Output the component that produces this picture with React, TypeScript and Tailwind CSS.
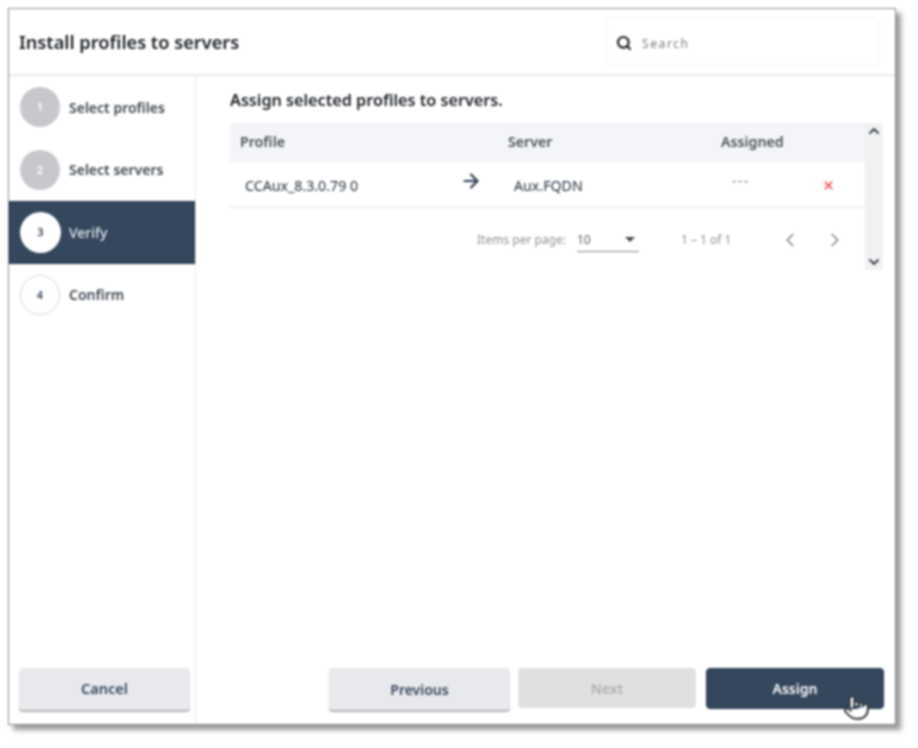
import React from 'react';
import { ArrowRight, ChevronDown, ChevronLeft, ChevronRight, ChevronUp, Pointer, Search, X } from 'lucide-react';

const steps = [
  { n: 1, label: 'Select profiles', state: 'done' },
  { n: 2, label: 'Select servers', state: 'done' },
  { n: 3, label: 'Verify', state: 'active' },
  { n: 4, label: 'Confirm', state: 'todo' },
];

const App: React.FC = () => {
  return (
    <div className="w-[918px] h-[748px] bg-white pt-[8px] pl-[8px] font-['Noto_Sans',sans-serif] blur-[0.8px]">
      <div className="relative w-[888px] h-[717px] flex flex-col bg-white border border-[#8c8c8c] shadow-[5px_5px_5px_rgba(0,0,0,0.4)]">
        {/* Header */}
        <div className="h-[67px] shrink-0 flex items-center justify-between pt-[1px] pl-[10px] pr-[16px] border-b-2 border-[#e8eaec]">
          <h1 className="mt-[1px] text-[18.2px] font-semibold text-[#1c2025]">Install profiles to servers</h1>
          <div className="w-[273px] h-[48px] flex items-center gap-[10px] pl-[9px] rounded border border-[#f1f2f3]">
            <Search size={16} strokeWidth={3.2} className="mt-[2px] text-[#1c2025]" />
            <span className="mt-[3px] text-[12px] tracking-[1.6px] text-[#777b80]">Search</span>
          </div>
        </div>

        <div className="flex-1 flex min-h-0">
          {/* Steps */}
          <div className="w-[187px] shrink-0 flex flex-col border-r border-[#e6e8ea] pb-[14px]">
            {steps.map((s) => (
              <div
                key={s.n}
                className={
                  s.state === 'active'
                    ? 'h-[62.5px] flex items-center pl-[10px] gap-[8px] bg-[#34475d] border border-[#25364a]'
                    : 'h-[62.5px] flex items-center pl-[11px] gap-[9px]'
                }
              >
                <div
                  className={
                    s.state === 'done'
                      ? 'w-[40px] h-[40px] rounded-full flex items-center justify-center bg-[#c6c8cb] text-white text-[11px] font-semibold'
                      : s.state === 'active'
                        ? 'w-[41px] h-[41px] rounded-full flex items-center justify-center bg-white text-[#34475d] text-[11px] font-semibold'
                        : 'w-[40px] h-[40px] rounded-full flex items-center justify-center bg-white border border-[#d6d8da] text-[#34475d] text-[11px] font-semibold'
                  }
                >
                  {s.n}
                </div>
                <span className={s.state === 'active' ? 'text-[14px] font-medium text-[#e3e8ee]' : 'text-[14px] font-semibold text-[#3d4650]'}>
                  {s.label}
                </span>
              </div>
            ))}
            <button className="mt-auto ml-[10px] mr-[5px] h-[42px] rounded-[4px] bg-[#e8e9ec] shadow-[0_2px_1px_rgba(0,0,0,0.3)] text-[14.5px] font-semibold text-[#34475d]">
              Cancel
            </button>
          </div>

          {/* Main */}
          <div className="flex-1 min-w-0 flex flex-col pl-[34px] pr-[11px] pb-[14px]">
            <p className="mt-[14px] h-[20px] leading-[20px] text-[16.2px] font-semibold text-[#1c2025]">Assign selected profiles to servers.</p>
            <div className="mt-[13px] flex">
              <div className="w-[635px]">
                <div className="h-[38px] flex items-center bg-[#f4f5f8] text-[14.2px] font-semibold text-[#4a5057]">
                  <span className="w-[278px] pl-[10px]">Profile</span>
                  <span className="w-[213px]">Server</span>
                  <span>Assigned</span>
                </div>
                <div className="h-[47px] flex items-center pt-[3px] border-b-2 border-t border-[#eef0f2] text-[14.2px] text-[#1f2c3b]">
                  <span className="w-[230px] pl-[15px]">CCAux_8.3.0.79 0</span>
                  <span className="w-[54px] mb-[9px]">
                    <ArrowRight size={22} strokeWidth={2.4} className="text-[#2b3d52]" />
                  </span>
                  <span className="w-[215px]">Aux.FQDN</span>
                  <span className="w-[93px] pl-[3px] text-[#7d8288] text-[14px] leading-none mb-[10px] tracking-[1.4px]">---</span>
                  <X size={13} strokeWidth={3} className="text-[#f0414b]" />
                </div>
                <div className="mt-[12px] h-[40px] flex items-center text-[12px] text-[#8d9196]">
                  <span className="ml-[247px] w-[100px]">Items per page:</span>
                  <div className="w-[62px] h-[24px] flex items-center justify-between border-b border-[#7d8084] pr-[2px] text-[#555a60]">
                    <span>10</span>
                    <span className="w-0 h-0 border-x-[5px] border-x-transparent border-t-[5px] border-t-[#3f4449] mr-[2px]" />
                  </div>
                  <span className="ml-[42px] w-[98px]">1 – 1 of 1</span>
                  <ChevronLeft size={22} strokeWidth={1.7} className="text-[#7d8085]" />
                  <ChevronRight size={22} strokeWidth={1.7} className="ml-[23px] text-[#7d8085]" />
                </div>
              </div>
              <div className="w-[18px] h-[147px] flex flex-col items-center justify-between bg-[#f1f1f1]">
                <ChevronUp size={16} strokeWidth={3} className="text-[#3d4650]" />
                <ChevronDown size={16} strokeWidth={3} className="text-[#3d4650]" />
              </div>
            </div>

            <div className="mt-auto flex justify-end">
              <button className="w-[181px] h-[42px] rounded-[4px] bg-[#e8e9ec] shadow-[0_2px_1px_rgba(0,0,0,0.3)] text-[14px] font-semibold text-[#34475d]">
                Previous
              </button>
              <button className="ml-[8px] w-[178px] h-[40px] rounded-[4px] bg-[#e0e0e0] text-[14px] font-semibold text-[#b0b0b0]">
                Next
              </button>
              <button className="ml-[10px] w-[178px] h-[41px] rounded-[4px] bg-[#34475d] border border-[#25364a] text-[14px] font-semibold text-white">
                Assign
              </button>
            </div>
          </div>
        </div>

        {/* mouse cursor */}
        <Pointer size={27} strokeWidth={1.7} fill="white" className="absolute left-[834px] top-[685px] text-[#33383d]" />
      </div>
    </div>
  );
};

export default App;
